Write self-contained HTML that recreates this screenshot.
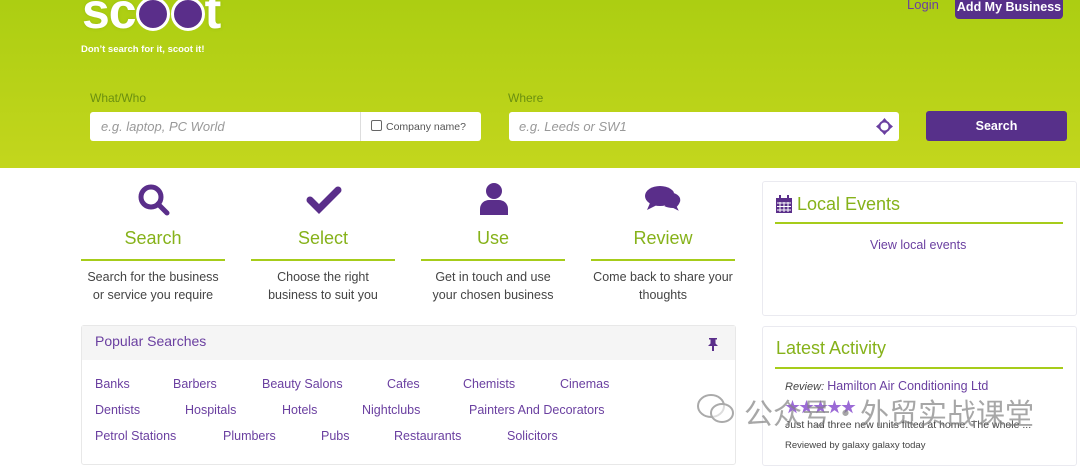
<!DOCTYPE html>
<html><head><meta charset="utf-8"><style>
*{margin:0;padding:0;box-sizing:border-box}
body{width:1080px;height:454px;overflow:hidden;background:#fff;font-family:"Liberation Sans","Noto Sans CJK SC",sans-serif;position:relative;font-size:13px;color:#444}
.a{position:absolute;white-space:nowrap}
.hdr{position:absolute;left:0;top:0;width:1080px;height:168px;background:linear-gradient(#acce12,#c3d61d)}
.pl{color:#6a3fa0;font-size:12.5px}
.ttl{color:#86b21a;font-size:18px;text-align:center;width:144px}
.ln{position:absolute;height:2px;background:#a6cc1a}
.desc{text-align:center;width:160px;font-size:12.5px;line-height:18px;color:#444}
.o{display:inline-block;width:34px;height:34px;border-radius:50%;background:#5a2e8a;vertical-align:-3px;border:3px solid #fff}
</style></head><body>
<div class="hdr"></div>
<div class="a" style="left:82px;top:-18px;font-size:50px;font-weight:bold;color:#fff;letter-spacing:-1px;text-shadow:0 0 3px #97be10">sc<span class="o"></span><span class="o" style="margin-left:1px"></span>t</div>
<div class="a" style="left:81px;top:44px;font-size:9.5px;font-weight:bold;color:#fff">Don’t search for it, scoot it!</div>
<div class="a" style="left:907px;top:-3px;font-size:13px;color:#6a3fa0">Login</div>
<div class="a" style="left:955px;top:-12px;width:108px;height:31px;background:#57308a;border-radius:4px;color:#fff;font-weight:bold;font-size:12.5px;text-align:center;padding-top:12px">Add My Business</div>
<div class="a" style="left:90px;top:91px;font-size:12px;color:#6b8f10">What/Who</div>
<div class="a" style="left:508px;top:91px;font-size:12px;color:#6b8f10">Where</div>
<div class="a" style="left:90px;top:112px;width:270px;height:29px;background:#fff;border-radius:3px 0 0 3px;font-style:italic;color:#999;padding:7px 0 0 11px">e.g. laptop, PC World</div>
<div class="a" style="left:360px;top:112px;width:121px;height:29px;background:#fff;border-left:1px solid #ddd;border-radius:0 3px 3px 0;font-size:10.5px;color:#555;padding:8px 0 0 10px"><span style="display:inline-block;width:11px;height:11px;border:1px solid #666;border-radius:2px;vertical-align:-1px;margin-right:4px"></span>Company name?</div>
<div class="a" style="left:509px;top:112px;width:390px;height:29px;background:#fff;border-radius:3px;font-style:italic;color:#999;padding:7px 0 0 10px">e.g. Leeds or SW1</div>
<svg class="a" style="left:876px;top:118px" width="17" height="17" viewBox="0 0 17 17"><circle cx="8.5" cy="8.5" r="5" fill="none" stroke="#6a3fa0" stroke-width="2"/><path d="M8.5 0L6 3h5zM8.5 17L6 14h5zM0 8.5L3 6v5zM17 8.5L14 6v5z" fill="#6a3fa0"/></svg>
<div class="a" style="left:926px;top:111px;width:141px;height:30px;background:#57308a;border-radius:3px;color:#fff;font-weight:bold;font-size:12.5px;text-align:center;padding-top:8px">Search</div>

<svg class="a" style="left:136px;top:183px" width="36" height="36" viewBox="0 0 36 36"><circle cx="15" cy="14" r="10" fill="none" stroke="#5a2e8a" stroke-width="5"/><path d="M22 21l9 9" stroke="#5a2e8a" stroke-width="5" stroke-linecap="round"/></svg>
<svg class="a" style="left:306px;top:186px" width="36" height="28" viewBox="0 0 36 28"><path d="M4 14l9 9L32 4" fill="none" stroke="#5a2e8a" stroke-width="7" stroke-linecap="round"/></svg>
<svg class="a" style="left:478px;top:182px" width="32" height="34" viewBox="0 0 32 34"><circle cx="16" cy="9" r="8" fill="#5a2e8a"/><path d="M2 33v-6c0-6 5-9 9-9h10c4 0 9 3 9 9v6z" fill="#5a2e8a"/></svg>
<svg class="a" style="left:644px;top:184px" width="40" height="32" viewBox="0 0 40 32"><ellipse cx="16" cy="12" rx="15" ry="10" fill="#5a2e8a"/><path d="M6 19l-3 7 10-5z" fill="#5a2e8a"/><path d="M30 8c6 2 8 6 7 10-1 3-3 5-3 5l3 6-8-4c-4 0-7-1-9-2" fill="#5a2e8a" stroke="#fff" stroke-width="2"/></svg>
<div class="a ttl" style="left:81px;top:228px">Search</div>
<div class="a ttl" style="left:251px;top:228px">Select</div>
<div class="a ttl" style="left:421px;top:228px">Use</div>
<div class="a ttl" style="left:591px;top:228px">Review</div>
<div class="ln" style="left:81px;top:259px;width:144px"></div>
<div class="ln" style="left:251px;top:259px;width:144px"></div>
<div class="ln" style="left:421px;top:259px;width:144px"></div>
<div class="ln" style="left:591px;top:259px;width:144px"></div>
<div class="a desc" style="left:73px;top:268px">Search for the business<br>or service you require</div>
<div class="a desc" style="left:243px;top:268px">Choose the right<br>business to suit you</div>
<div class="a desc" style="left:413px;top:268px">Get in touch and use<br>your chosen business</div>
<div class="a desc" style="left:583px;top:268px">Come back to share your<br>thoughts</div>

<div class="a" style="left:81px;top:325px;width:655px;height:140px;border:1px solid #e8e8e8;border-radius:3px"></div>
<div class="a" style="left:82px;top:326px;width:653px;height:34px;background:#f5f5f5"></div>
<div class="a" style="left:95px;top:333px;font-size:14px;color:#6a3fa0">Popular Searches</div>
<svg class="a" style="left:707px;top:337px" width="12" height="14" viewBox="0 0 12 14"><path d="M2 1h8v1.5H8.5v4L11 9H7v5H5V9H1l2.5-2.5v-4H2z" fill="#5a2e8a"/></svg>
<div class="a pl" style="left:95px;top:377px">Banks</div><div class="a pl" style="left:173px;top:377px">Barbers</div><div class="a pl" style="left:262px;top:377px">Beauty Salons</div><div class="a pl" style="left:387px;top:377px">Cafes</div><div class="a pl" style="left:463px;top:377px">Chemists</div><div class="a pl" style="left:560px;top:377px">Cinemas</div>
<div class="a pl" style="left:95px;top:403px">Dentists</div><div class="a pl" style="left:185px;top:403px">Hospitals</div><div class="a pl" style="left:282px;top:403px">Hotels</div><div class="a pl" style="left:362px;top:403px">Nightclubs</div><div class="a pl" style="left:469px;top:403px">Painters And Decorators</div>
<div class="a pl" style="left:95px;top:429px">Petrol Stations</div><div class="a pl" style="left:223px;top:429px">Plumbers</div><div class="a pl" style="left:321px;top:429px">Pubs</div><div class="a pl" style="left:394px;top:429px">Restaurants</div><div class="a pl" style="left:507px;top:429px">Solicitors</div>

<div class="a" style="left:762px;top:181px;width:315px;height:135px;border:1px solid #eaeaf0;border-radius:3px"></div>
<svg class="a" style="left:775px;top:195px" width="18" height="19" viewBox="0 0 18 19"><rect x="1" y="3" width="16" height="15" fill="#5a2e8a"/><path d="M2 8h14M2 11.5h14M2 15h14M5 7v10M9 7v10M13 7v10" stroke="#fff" stroke-width="1"/><rect x="4" y="0" width="2" height="5" fill="#5a2e8a"/><rect x="12" y="0" width="2" height="5" fill="#5a2e8a"/></svg>
<div class="a" style="left:797px;top:194px;font-size:18px;color:#86b21a">Local Events</div>
<div class="ln" style="left:775px;top:222px;width:288px"></div>
<div class="a" style="left:870px;top:238px;font-size:12.5px;color:#6a3fa0">View local events</div>
<div class="a" style="left:762px;top:326px;width:315px;height:140px;border:1px solid #eaeaf0;border-radius:3px"></div>
<div class="a" style="left:776px;top:338px;font-size:18px;color:#86b21a">Latest Activity</div>
<div class="ln" style="left:775px;top:367px;width:288px"></div>
<div class="a" style="left:785px;top:379px;font-size:11px;color:#444"><i>Review:</i> <span style="color:#6a3fa0;font-size:12.5px">Hamilton Air Conditioning Ltd</span></div>
<div class="a" style="left:785px;top:396px;font-size:15px;color:#9b6ad6;letter-spacing:-1px">★★★★★</div>
<div class="a" style="left:785px;top:419px;font-size:10.5px;color:#444">Just had three new units fitted at home. The whole ...</div>
<div class="a" style="left:785px;top:440px;font-size:9.5px;color:#444">Reviewed by galaxy galaxy today</div>
<svg class="a" style="left:697px;top:393px" width="38" height="32" viewBox="0 0 38 32"><ellipse cx="14" cy="13" rx="13" ry="11" fill="none" stroke="#aaa" stroke-width="2"/><ellipse cx="25" cy="20" rx="11" ry="9" fill="rgba(255,255,255,.6)" stroke="#aaa" stroke-width="2"/></svg>
<div class="a" style="left:744px;top:391px;font-size:29px;color:rgba(130,130,130,.7)">公众号・外贸实战课堂</div>
</body></html>
